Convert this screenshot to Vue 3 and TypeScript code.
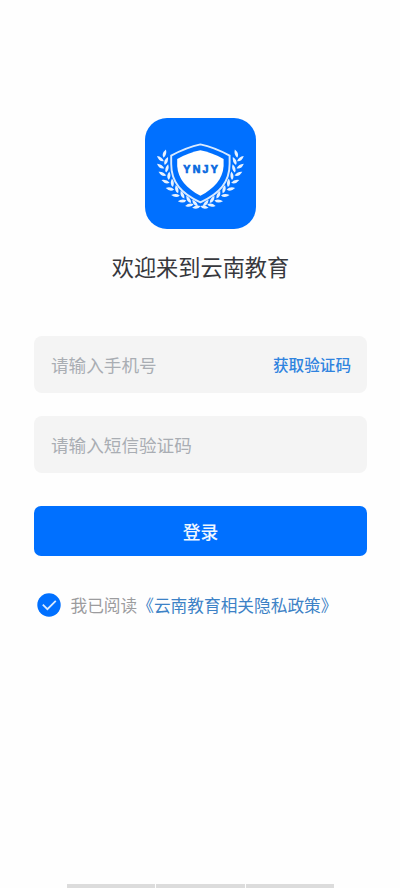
<script setup lang="ts">
import { ref } from 'vue'

interface Leaf {
  x: number
  y: number
  angle: number
}

const phone = ref('')
const code = ref('')
const agreed = ref(true)

// Leaves of the left laurel branch, from its tip down to the bottom; the right one is mirrored.
const leaves: Leaf[] = [
  { x: 19.6, y: 35.6, angle: -72 },
  { x: 15.4, y: 40.8, angle: -140 },
  { x: 21.2, y: 43, angle: -66 },
  { x: 15.6, y: 48.2, angle: -145 },
  { x: 22, y: 50.4, angle: -74 },
  { x: 17.4, y: 55.9, angle: -152 },
  { x: 23.9, y: 57.8, angle: -84 },
  { x: 20.6, y: 63.6, angle: -160 },
  { x: 27.3, y: 64.8, angle: -94 },
  { x: 25, y: 70.9, angle: -168 },
  { x: 31.8, y: 71.2, angle: -104 },
  { x: 30.6, y: 77.4, angle: -176 },
  { x: 37.4, y: 76.8, angle: -114 },
  { x: 37.2, y: 83, angle: -184 },
  { x: 43.6, y: 81.6, angle: -122 },
  { x: 44.5, y: 87.2, angle: -190 },
  { x: 50, y: 85.2, angle: -130 },
  { x: 51.5, y: 89, angle: -190 },
]
</script>

<template>
  <main class="page">
    <svg class="logo" viewBox="0 0 111 111">
      <g v-for="side in ['left', 'right']" :key="side" :transform="side === 'right' ? 'translate(110.8 0) scale(-1 1)' : undefined">
        <path
          v-for="(leaf, i) in leaves"
          :key="i"
          class="leaf"
          d="M-4.2 .3Q-1-3.4 4.4 0Q0 2.8-4.2 .3Z"
          :transform="`translate(${leaf.x} ${leaf.y}) rotate(${leaf.angle})`"
        />
      </g>
      <path class="rim" d="M55.4 26.4Q42 29.2 26.2 37.6V46C26.2 64 36 75.5 55.4 84.3C74.8 75.5 84.6 64 84.6 46V37.6Q69 29.2 55.4 26.4Z" />
      <path class="shield" d="M55.4 32.3Q44.5 34.2 32.2 41V48C33 61 41.5 70.5 55.4 77.7C69.3 70.5 77.8 61 78.6 48V41Q66.3 34.2 55.4 32.3Z" />
      <text class="mark" x="38.3" y="55.2" textLength="34.5" lengthAdjust="spacing">YNJY</text>
    </svg>
    <h1 class="title">欢迎来到云南教育</h1>
    <form class="form" @submit.prevent>
      <div class="field">
        <input v-model="phone" class="input" type="tel" placeholder="请输入手机号" />
        <button class="send" type="button">获取验证码</button>
      </div>
      <div class="field">
        <input v-model="code" class="input" placeholder="请输入短信验证码" />
      </div>
      <button class="login" type="submit">登录</button>
    </form>
    <div class="consent">
      <svg class="check" viewBox="0 0 24 24" @click="agreed = !agreed">
        <circle cx="12" cy="12" r="11.7" />
        <path v-if="agreed" d="M5.8 11.6L10.4 16.2L18.8 7.8" />
      </svg>
      <span>我已阅读<a class="policy">《云南教育相关隐私政策》</a></span>
    </div>
    <div class="dock"><i /><i /><i /></div>
  </main>
</template>

<style>
body {
  margin: 0;
  background: #fefefe;
}
</style>

<style scoped>
.page {
  box-sizing: border-box;
  display: flex;
  flex-direction: column;
  align-items: center;
  height: 888px;
  padding: 117.5px 33px 0 34px;
  overflow: hidden;
  font-family: "Noto Sans CJK SC", sans-serif;
}
.logo {
  flex: none;
  width: 111px;
  height: 111px;
  border-radius: 22px;
  background: #0070ff;
}
.leaf {
  fill: #e8f2ff;
}
.shield {
  fill: #fff;
}
.rim {
  fill: #0070ff;
  stroke: #d9eaff;
  stroke-width: 1.9;
}
.mark {
  fill: #0869df;
  stroke: #0869df;
  stroke-width: 0.7;
  font: 700 10.6px "Liberation Sans", sans-serif;
}
.title {
  margin: 21px 0 0;
  color: #37383d;
  font-size: 22.2px;
  font-weight: 400;
  line-height: 32px;
}
.form {
  display: flex;
  flex-direction: column;
  align-self: stretch;
  margin-top: 54.5px;
}
.field {
  box-sizing: border-box;
  display: flex;
  align-items: center;
  height: 57px;
  margin-bottom: 22.5px;
  padding: 0 16px 0 17px;
  border-radius: 8px;
  background: #f4f4f4;
}
.input {
  flex: 1;
  min-width: 0;
  height: 30px;
  padding: 0;
  border: 0;
  outline: 0;
  background: transparent;
  color: #37383d;
  font: 400 17.6px "Noto Sans CJK SC", sans-serif;
}
.input::placeholder {
  color: #a9adb3;
  opacity: 1;
}
.send {
  padding: 0 0 2px;
  border: 0;
  background: transparent;
  color: #2f83df;
  font: 500 15.6px/24px "Noto Sans CJK SC", sans-serif;
}
.login {
  height: 50px;
  margin-top: 11px;
  padding: 0;
  border: 0;
  border-radius: 7px;
  background: #0070ff;
  color: #f0f7ff;
  font: 500 17.8px/50px "Noto Sans CJK SC", sans-serif;
}
.consent {
  display: flex;
  align-items: center;
  align-self: stretch;
  gap: 9.5px;
  height: 26px;
  margin: 36px 0 0 3px;
  color: #9c9c9e;
  font-size: 16.7px;
  line-height: 26px;
  white-space: nowrap;
}
.check {
  flex: none;
  width: 24px;
  height: 24px;
}
.check circle {
  fill: #0070ff;
}
.check path {
  fill: none;
  stroke: #d9eaff;
  stroke-width: 1.8;
}
.policy {
  color: #3d82c6;
}
.dock {
  display: flex;
  gap: 1px;
  width: 267px;
  height: 4px;
  margin-top: auto;
}
.dock i {
  flex: 1;
  background: #dcdcdc;
}
</style>
